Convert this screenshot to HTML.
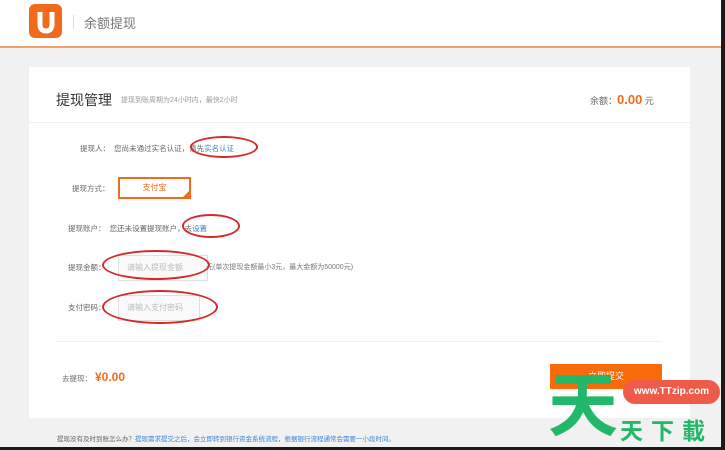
<!DOCTYPE html><html><head><meta charset="utf-8"><style>
*{margin:0;padding:0;box-sizing:border-box}
body{width:725px;height:450px;overflow:hidden;background:#f1f1f1;font-family:"Liberation Sans","Noto Sans CJK SC",sans-serif;position:relative;color:#555}
.a{position:absolute;white-space:nowrap}
.hd{position:absolute;left:0;top:0;width:721px;height:48px;background:#fff;border-bottom:2px solid #f0a06a}
.card{position:absolute;left:29px;top:67px;width:661px;height:351px;background:#fff}
.el{position:absolute;border:2px solid #d42a2a;border-radius:50%}
.in{position:absolute;border:1px solid #e0e0e0;background:#fafafa;font-size:8px;color:#bbb;padding-left:8px;line-height:24px}
</style></head><body>
<div class="hd"></div>
<div class="a" style="left:29px;top:4px;width:33px;height:34px;background:#f26b1d;border-radius:6px"></div>
<svg class="a" style="left:29px;top:4px" width="33" height="34"><path d="M11 8 V20 Q11 27 17 27 Q23 27 23 20 V8" stroke="#fff" stroke-width="5" fill="none"/></svg>
<div class="a" style="left:73px;top:15px;width:1px;height:14px;background:#ddd"></div>
<div class="a" style="left:84px;top:13px;font-size:13px;color:#777">余额提现</div>
<div class="card"></div>
<div class="a" style="left:56px;top:90px;font-size:14px;color:#333">提现管理</div>
<div class="a" style="left:121px;top:95px;font-size:7px;color:#999">提现到账周期为24小时内，最快2小时</div>
<div class="a" style="left:590px;top:92px;font-size:9px;color:#666">余额：<span style="color:#f26b1d;font-size:13px;font-weight:bold">0.00</span> 元</div>
<div class="a" style="left:29px;top:122px;width:661px;height:1px;background:#eee"></div>
<div class="a" style="left:80px;top:143px;font-size:7.5px;color:#666">提现人：&nbsp;&nbsp;您尚未通过实名认证，请先<span style="color:#3a86d8">实名认证</span></div>
<div class="el" style="left:190px;top:136px;width:68px;height:22px"></div>
<div class="a" style="left:72px;top:183px;font-size:7.5px;color:#666">提现方式：</div>
<div class="a" style="left:118px;top:177px;width:73px;height:22px;border:2px solid #f26b1d;font-size:8px;color:#f26b1d;text-align:center;line-height:18px">支付宝</div>
<div class="a" style="left:183px;top:191px;width:0;height:0;border-left:6px solid transparent;border-bottom:6px solid #f26b1d"></div>
<div class="a" style="left:68px;top:223px;font-size:7.5px;color:#666">提现账户：&nbsp;&nbsp;您还未设置提现账户，去<span style="color:#3a86d8">设置</span></div>
<div class="el" style="left:182px;top:214px;width:58px;height:24px"></div>
<div class="a" style="left:68px;top:262px;font-size:7.5px;color:#666">提现金额：</div>
<div class="in" style="left:118px;top:255px;width:90px;height:26px">请输入提现金额</div>
<div class="a" style="left:206px;top:262px;font-size:7px;color:#777">元(单次提现金额最小3元，最大金额为50000元)</div>
<div class="el" style="left:102px;top:250px;width:108px;height:30px"></div>
<div class="a" style="left:68px;top:302px;font-size:7.5px;color:#666">支付密码：</div>
<div class="in" style="left:118px;top:295px;width:82px;height:26px">请输入支付密码</div>
<div class="el" style="left:102px;top:290px;width:116px;height:34px"></div>
<div class="a" style="left:56px;top:341px;width:606px;height:1px;background:#eee"></div>
<div class="a" style="left:62px;top:373px;font-size:7.5px;color:#666">去提现：</div>
<div class="a" style="left:95px;top:370px;font-size:12px;color:#f26b1d;font-weight:bold">¥0.00</div>
<div class="a" style="left:550px;top:364px;width:112px;height:25px;background:#f96a0a;color:#fff;font-size:9px;text-align:center;line-height:25px">立即提交</div>
<div class="a" style="left:57px;top:433px;font-size:6.5px;color:#666">提现没有及时到账怎么办？<span style="color:#3a86d8">提现需求提交之后，会立即转到银行资金系统流程，根据银行流程通常会需要一小段时间。</span></div>
<div class="a" style="left:548px;top:362px;font-size:70px;line-height:88px;font-weight:bold;color:#22b86a">天</div>
<div class="a" style="left:623px;top:380px;width:97px;height:24px;background:#ee5b4a;border-radius:12px;color:#fff;font-size:10px;font-weight:bold;text-align:center;line-height:24px">www.TTzip.com</div>
<div class="a" style="left:620px;top:412px;font-size:23px;font-weight:bold;color:#22b86a;letter-spacing:8px">天下載</div>
<div class="a" style="left:721px;top:0;width:4px;height:450px;background:#1a1a1a"></div>
<div class="a" style="left:0;top:447px;width:725px;height:3px;background:#1a1a1a"></div>
</body></html>
